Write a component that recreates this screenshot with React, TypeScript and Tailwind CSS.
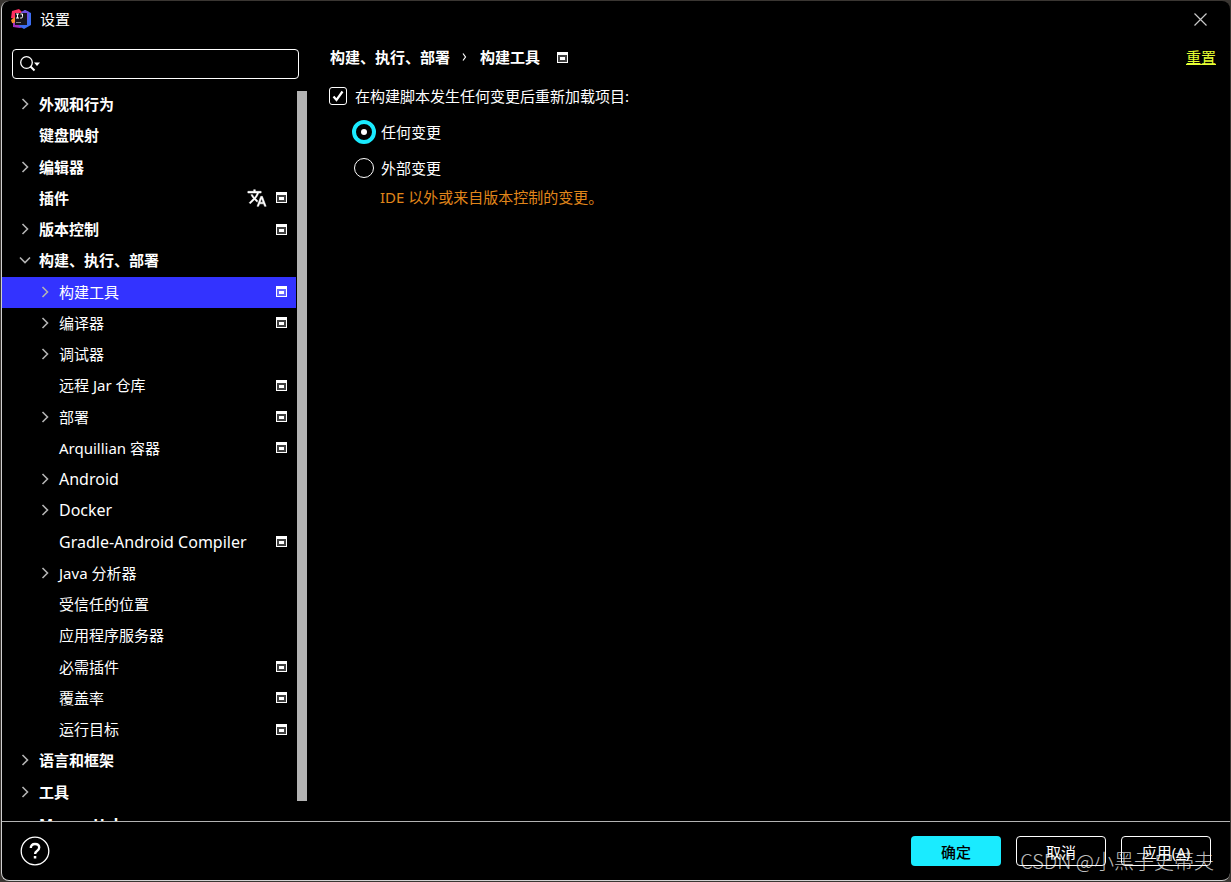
import { useState } from "react";

type Item = {
  label: string;
  level?: 1;
  latin?: boolean;
  arrow?: "right" | "down";
  project?: boolean;
  translate?: boolean;
};

const items: Item[] = [
  { label: "外观和行为", arrow: "right" },
  { label: "键盘映射" },
  { label: "编辑器", arrow: "right" },
  { label: "插件", translate: true, project: true },
  { label: "版本控制", arrow: "right", project: true },
  { label: "构建、执行、部署", arrow: "down" },
  { label: "构建工具", level: 1, arrow: "right", project: true },
  { label: "编译器", level: 1, arrow: "right", project: true },
  { label: "调试器", level: 1, arrow: "right" },
  { label: "远程 Jar 仓库", level: 1, project: true },
  { label: "部署", level: 1, arrow: "right", project: true },
  { label: "Arquillian 容器", level: 1, project: true },
  { label: "Android", level: 1, latin: true, arrow: "right" },
  { label: "Docker", level: 1, latin: true, arrow: "right" },
  { label: "Gradle-Android Compiler", level: 1, latin: true, project: true },
  { label: "Java 分析器", level: 1, arrow: "right" },
  { label: "受信任的位置", level: 1 },
  { label: "应用程序服务器", level: 1 },
  { label: "必需插件", level: 1, project: true },
  { label: "覆盖率", level: 1, project: true },
  { label: "运行目标", level: 1, project: true },
  { label: "语言和框架", arrow: "right" },
  { label: "工具", arrow: "right" },
  { label: "Maven Helper" },
];

const Logo = () => (
  <svg className="size-5" viewBox="0 0 20 20" aria-hidden="true">
    <path d="M1 2 8 0l4 4-3 7-9-2z" fill="#fc2d5f" />
    <path d="M0 11l4-3 1 7-4-1z" fill="#f98c2b" />
    <path d="M2 14l4-1 6 5-3 1-7-1z" fill="#a12fc0" />
    <path d="M10 4l4-3 6 3v12l-7 4-5-3z" fill="#3c6df0" />
    <path d="M10 3l4-2 4 2-1 9z" fill="#7350e0" />
    <path d="M4 4H16V16H4z" fill="#16141a" />
    <path d="M5 5h3M6.500 5v4M5 9h3M9.500 5h2v2.700q0 1.300-1.300 1.300h-1" stroke="#fff" strokeWidth="1" fill="none" />
    <path d="M5 13.500h5" stroke="#888" strokeWidth="1" />
  </svg>
);

const ProjectIcon = () => (
  <svg className="size-[11px] shrink-0" viewBox="0 0 11 11" fill="#fff" aria-hidden="true">
    <path d="M0 0h11v11H0zM1 3v7h9V3z" fillRule="evenodd" />
    <path d="M1 3h9v7H1z" opacity=".25" />
    <path d="M3 5h5v3H3z" />
  </svg>
);

const Arrow = ({ dir }: { dir?: "right" | "down" }) => (
  <svg className="size-3 shrink-0" viewBox="0 0 12 12" fill="none" stroke="#b3b3b3" strokeWidth="1.600" aria-hidden="true">
    {dir === "right" && <path d="M3.500 1 8.500 6l-5 5" />}
    {dir === "down" && <path d="M1 3.500 6 8.500l5-5" />}
  </svg>
);

const Row = ({ item, selected, onSelect }: { item: Item; selected: boolean; onSelect: () => void }) => (
  <li className="flex">
    <button
      type="button"
      onClick={onSelect}
      className={`flex flex-1 items-center gap-2 pr-[9px] pb-px text-left ${item.level ? "pl-[37px]" : "pl-[17px] font-bold"} ${selected ? "bg-[#3333ff]" : ""}`}
    >
      <Arrow dir={item.arrow} />
      <span className={`flex-1 whitespace-nowrap ${item.latin ? "text-base leading-5" : ""}`}>{item.label}</span>
      {item.translate && (
        <svg className="mr-px size-5" viewBox="0 0 24 24" fill="#fff" stroke="#fff" strokeWidth=".6" aria-hidden="true">
          <path d="M12.870 15.070l-2.540-2.510.030-.030A17.520 17.520 0 0 0 14.070 6H17V4h-7V2H8v2H1v2h11.170C11.500 7.920 10.440 9.750 9 11.350 8.070 10.320 7.300 9.190 6.690 8h-2c.730 1.630 1.730 3.170 2.980 4.560l-5.090 5.020L4 19l5-5 3.110 3.110.760-2.040zM18.500 10h-2L12 22h2l1.120-3h4.750L21 22h2l-4.500-12zm-2.620 7l1.620-4.330L19.120 17h-3.240z" />
        </svg>
      )}
      {item.project && <ProjectIcon />}
    </button>
  </li>
);

const App = () => {
  const [selected, setSelected] = useState("构建工具");
  const [reload, setReload] = useState(true);
  const [mode, setMode] = useState("any");

  return (
    <div className="h-screen bg-[#3a3632] p-px font-['Noto_Sans','Noto_Sans_CJK_SC',sans-serif] text-[15px] leading-5 text-white">
      <div className="relative flex h-full flex-col overflow-hidden rounded-lg border-b border-l border-[#d0d0d0] bg-black">
        <header className="flex h-9 shrink-0 items-center gap-[9px] pr-[23px] pl-[9px]">
          <Logo />
          <h1 className="flex-1">设置</h1>
          <button type="button" aria-label="关闭">
            <svg className="size-[13px]" viewBox="0 0 13 13" stroke="#c8c8c8" strokeWidth="1.200">
              <path d="M.5.500l12 12M12.500.500l-12 12" />
            </svg>
          </button>
        </header>

        <div className="flex min-h-0 flex-1">
          <aside className="flex w-[305px] shrink-0 flex-col">
            <div className="mt-3 mr-2 mb-[10px] ml-[10px] flex h-[30px] shrink-0 items-center rounded border border-white px-[7px]">
              <svg className="h-4 w-5 shrink-0" viewBox="0 0 20 16" fill="none" stroke="#fff" aria-hidden="true">
                <circle cx="6.500" cy="6.500" r="5.800" strokeWidth="1.300" />
                <path d="M10.500 10.500l4 4" strokeWidth="2" />
                <path d="M14 6.500h6l-3 3.500z" fill="#fff" stroke="none" />
              </svg>
              <input type="text" aria-label="搜索" className="min-w-0 flex-1 bg-transparent px-1 outline-none" />
            </div>
            <div className="flex min-h-0 flex-1">
              <div className="min-h-0 flex-1 overflow-hidden">
                <ul className="grid h-[750px] auto-rows-fr">
                  {items.map((item) => (
                    <Row
                      key={item.label}
                      item={item}
                      selected={selected === item.label}
                      onSelect={() => setSelected(item.label)}
                    />
                  ))}
                </ul>
              </div>
              <div className="mt-[2px] mb-5 ml-px w-[10px] bg-[#b3b3b3]" />
            </div>
          </aside>

          <main className="flex-1 pr-[14px] pl-[22px]">
            <div className="mt-[10px] flex items-center pl-px font-bold">
              <span>构建、执行、部署</span>
              <svg className="mr-[13px] ml-3 h-2 w-[5px]" viewBox="0 0 5 8" fill="none" stroke="#fff" strokeWidth="1.200" aria-hidden="true">
                <path d="M1 .5 3.500 4 1 7.500" />
              </svg>
              <span className="mr-[17px]">构建工具</span>
              <ProjectIcon />
              <a href="#" className="ml-auto font-normal text-[#e6ff33] underline underline-offset-1">
                重置
              </a>
            </div>

            <label className="mt-[19px] flex items-center gap-2">
              <span className="grid size-[18px] place-items-center">
                <input
                  type="checkbox"
                  checked={reload}
                  onChange={(e) => setReload(e.target.checked)}
                  className="col-start-1 row-start-1 size-[18px] appearance-none rounded-[3px] border border-white"
                />
                {reload && (
                  <svg className="pointer-events-none col-start-1 row-start-1 size-3" viewBox="0 0 12 12" fill="none" stroke="#fff" strokeWidth="2.200" aria-hidden="true">
                    <path d="M1.500 6.500 4.500 10 10.500 1.500" />
                  </svg>
                )}
              </span>
              在构建脚本发生任何变更后重新加载项目:
            </label>

            <div className="mt-[14px] ml-[23px] flex flex-col gap-3">
              {[
                ["any", "任何变更"],
                ["external", "外部变更"],
              ].map(([value, text]) => (
                <label key={value} className="flex h-6 items-center gap-[5px]">
                  <span className="grid size-6 place-items-center">
                    <input
                      type="radio"
                      name="mode"
                      value={value}
                      checked={mode === value}
                      onChange={() => setMode(value)}
                      className="col-start-1 row-start-1 size-5 appearance-none rounded-full border border-white checked:size-6 checked:border-4 checked:border-[#1aebff]"
                    />
                    {mode === value && (
                      <span className="pointer-events-none col-start-1 row-start-1 size-[6px] rounded-full bg-white" />
                    )}
                  </span>
                  {text}
                </label>
              ))}
            </div>
            <p className="mt-[7px] ml-[51px] text-[#e0861a]">IDE 以外或来自版本控制的变更。</p>
          </main>
        </div>

        <footer className="flex h-[59px] shrink-0 items-center gap-[15px] border-t border-[#b3b3b3] pr-[19px] pl-[18px]">
          <button type="button" aria-label="帮助" className="mr-auto">
            <svg className="size-[30px]" viewBox="0 0 30 30" fill="none" stroke="#fff">
              <circle cx="15" cy="15" r="13.800" strokeWidth="1.300" />
              <path d="M10.800 12q0-4 4.200-4t4.200 3.600q0 1.900-2.200 3.300-1.900 1.200-1.900 3.100" strokeWidth="2.400" />
              <path d="M13.800 20h2.500v2.500h-2.500z" fill="#fff" stroke="none" />
            </svg>
          </button>
          <button type="button" className="h-[30px] w-[90px] rounded bg-[#1aebff] pt-[2px] font-medium text-black">
            确定
          </button>
          <button type="button" className="h-[30px] w-[90px] rounded border border-white pt-[2px]">
            取消
          </button>
          <button type="button" className="h-[30px] w-[90px] rounded border border-white pt-[2px]">
            应用(<span className="underline">A</span>)
          </button>
        </footer>

        <span className="pointer-events-none absolute right-4 bottom-[5px] font-['Noto_Sans_CJK_SC',sans-serif] text-xl leading-7 font-light text-white/75">
          CSDN @小黑子史蒂夫
        </span>
      </div>
    </div>
  );
};

export default App;
